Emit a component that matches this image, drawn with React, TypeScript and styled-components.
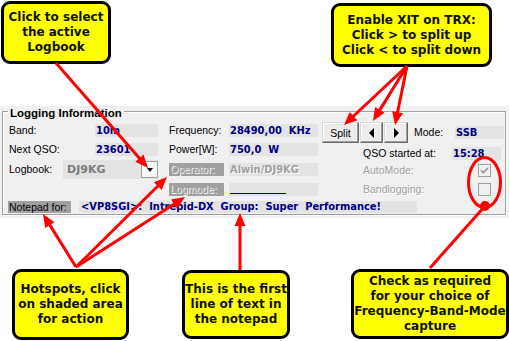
import React from "react";
import styled, { createGlobalStyle } from "styled-components";

const GlobalStyle = createGlobalStyle`
  html, body { margin: 0; padding: 0; background: #ffffff; }
  body { overflow: hidden; }
  * { box-sizing: border-box; }
`;

const VALUE_FONT = `"DejaVu Sans Condensed", "DejaVu Sans", sans-serif`;

const Page = styled.div`
  position: relative;
  width: 509px;
  height: 341px;
  overflow: hidden;
  background: #ffffff;
  font-family: "Liberation Sans", Arial, sans-serif;
`;

const TopRow = styled.div`
  display: flex;
  align-items: flex-start;
  height: 106px;
`;

const BottomRow = styled.div`
  display: flex;
  align-items: flex-start;
  padding-top: 51px;
`;

const Callout = styled.div<{ $w: number; $h: number; $mt?: number; $ml?: number }>`
  flex: none;
  width: ${(p) => p.$w}px;
  height: ${(p) => p.$h}px;
  margin-top: ${(p) => p.$mt ?? 0}px;
  margin-left: ${(p) => p.$ml ?? 0}px;
  display: flex;
  align-items: center;
  justify-content: center;
  text-align: center;
  background: #ffff00;
  border: 3px solid #000;
  border-radius: 9px;
  font-family: "DejaVu Sans", sans-serif;
  font-weight: bold;
  font-size: 12px;
  line-height: 15px;
  color: #111;
  white-space: nowrap;
`;

const Panel = styled.div`
  height: 112px;
  background: #f0f0f0;
  padding: 5px 3px 0 2px;
`;

const GroupBox = styled.div`
  position: relative;
  height: 104px;
  border: 1px solid #a0a0a0;
  box-shadow: inset 1px 1px 0 #ffffff, 1px 1px 0 #ffffff;
`;

const Legend = styled.span`
  position: absolute;
  top: -5px;
  left: 5px;
  padding: 0 2px;
  background: #f0f0f0;
  font: bold 11.5px/13px "Liberation Sans", Arial, sans-serif;
  color: #000;
  white-space: nowrap;
`;

const Columns = styled.div`
  display: flex;
  align-items: flex-start;
  padding-top: 10px;
`;

const Column = styled.div<{ $w: number; $ml: number; $mt?: number }>`
  flex: none;
  display: flex;
  flex-direction: column;
  width: ${(p) => p.$w}px;
  margin-left: ${(p) => p.$ml}px;
  margin-top: ${(p) => p.$mt ?? 0}px;
`;

const Row = styled.div<{ $h: number; $mt?: number; $pl?: number }>`
  display: flex;
  align-items: center;
  height: ${(p) => p.$h}px;
  margin-top: ${(p) => p.$mt ?? 0}px;
  padding-left: ${(p) => p.$pl ?? 0}px;
`;

const Label = styled.div<{ $w?: number; $ml?: number; $disabled?: boolean }>`
  flex: none;
  width: ${(p) => (p.$w ? `${p.$w}px` : "auto")};
  margin-left: ${(p) => p.$ml ?? 0}px;
  font-size: 10.5px;
  line-height: 13px;
  color: ${(p) => (p.$disabled ? "#a0a0a0" : "#000")};
  text-shadow: ${(p) => (p.$disabled ? "1px 1px 0 #ffffff" : "none")};
  white-space: nowrap;
`;

const ShadedLabel = styled.div<{ $w: number; $h: number; $disabled?: boolean }>`
  flex: none;
  width: ${(p) => p.$w}px;
  height: ${(p) => p.$h}px;
  padding-left: 1px;
  background: #a0a0a0;
  font-size: 10.5px;
  line-height: ${(p) => p.$h}px;
  color: ${(p) => (p.$disabled ? "#a0a0a0" : "#000")};
  text-shadow: ${(p) => (p.$disabled ? "1px 1px 0 #ffffff" : "none")};
  white-space: nowrap;
`;

const Value = styled.div<{ $w: number; $h?: number; $ml?: number; $disabled?: boolean }>`
  flex: none;
  width: ${(p) => p.$w}px;
  height: ${(p) => p.$h ?? 13}px;
  margin-left: ${(p) => p.$ml ?? 0}px;
  padding-left: 1px;
  background: #e3e3e3;
  font-family: ${VALUE_FONT};
  font-weight: bold;
  font-size: 11px;
  line-height: ${(p) => p.$h ?? 13}px;
  color: ${(p) => (p.$disabled ? "#a0a0a0" : "#000080")};
  text-shadow: ${(p) => (p.$disabled ? "1px 1px 0 #ffffff" : "none")};
  white-space: pre;
  overflow: hidden;
`;

const BlankLine = styled.span`
  display: inline-block;
  width: 56px;
  height: 11px;
  border-bottom: 1.5px solid #000080;
  vertical-align: top;
`;

const Combo = styled.div`
  flex: none;
  display: flex;
  align-items: center;
  justify-content: space-between;
  width: 95px;
  height: 19px;
  background: #e3e3e3;
`;

const ComboText = styled.span`
  padding-left: 4px;
  font-family: "DejaVu Sans", sans-serif;
  font-weight: bold;
  font-size: 11px;
  color: #7c7c7c;
`;

const DropButton = styled.div`
  display: flex;
  align-items: center;
  justify-content: center;
  width: 17px;
  height: 17px;
  border: 1px solid #a0a0a0;
  background: #f7f7f7;
`;

const DownTriangle = styled.span`
  width: 0;
  height: 0;
  border-left: 3.5px solid transparent;
  border-right: 3.5px solid transparent;
  border-top: 4px solid #000;
`;

const Button = styled.div<{ $w: number }>`
  flex: none;
  display: flex;
  align-items: center;
  justify-content: center;
  width: ${(p) => p.$w}px;
  height: 21px;
  margin-right: 1px;
  background: #ececec;
  border: 1px solid;
  border-color: #d8d8d8 #6a6a6a #6a6a6a #d8d8d8;
  box-shadow: inset -1px -1px 0 #a0a0a0, inset 1px 1px 0 #ffffff;
  font-size: 10.5px;
  color: #000;
`;

const SideTriangle = styled.span<{ $dir: "left" | "right" }>`
  width: 0;
  height: 0;
  border-top: 5px solid transparent;
  border-bottom: 5px solid transparent;
  ${(p) => (p.$dir === "left" ? "border-right: 5px solid #000;" : "border-left: 5px solid #000;")}
`;

const CheckBox = styled.span`
  flex: none;
  display: flex;
  align-items: center;
  justify-content: center;
  width: 13px;
  height: 13px;
  margin-left: auto;
  margin-right: 10px;
  border: 1px solid #a0a0a0;
  background: #f0f0f0;
`;

const NotepadRow = styled.div`
  display: flex;
  align-items: center;
  height: 12px;
  margin-top: 5px;
  margin-left: 5px;
`;

const NotepadText = styled.div`
  width: 338px;
  height: 12px;
  margin-left: 8px;
  padding-left: 2px;
  background: #e3e3e3;
  font-family: ${VALUE_FONT};
  font-weight: bold;
  font-size: 11px;
  line-height: 12px;
  color: #000080;
  white-space: pre;
  overflow: hidden;
`;

const Overlay = styled.svg`
  position: absolute;
  left: 0;
  top: 0;
  pointer-events: none;
`;

type ArrowProps = { x1: number; y1: number; x2: number; y2: number };

function Arrow({ x1, y1, x2, y2 }: ArrowProps) {
  const dx = x2 - x1;
  const dy = y2 - y1;
  const len = Math.hypot(dx, dy);
  const ux = dx / len;
  const uy = dy / len;
  const hl = 13;
  const hw = 5.5;
  const bx = x2 - ux * hl;
  const by = y2 - uy * hl;
  const px = -uy;
  const py = ux;
  return (
    <g>
      <line x1={x1} y1={y1} x2={bx + ux * 2} y2={by + uy * 2} stroke="#ff0000" strokeWidth={3} />
      <polygon
        points={`${x2},${y2} ${bx + px * hw},${by + py * hw} ${bx - px * hw},${by - py * hw}`}
        fill="#ff0000"
      />
    </g>
  );
}

const arrows: ArrowProps[] = [
  { x1: 56, y1: 63, x2: 148, y2: 168 },
  { x1: 407, y1: 66, x2: 344, y2: 125 },
  { x1: 407, y1: 66, x2: 373, y2: 121 },
  { x1: 407, y1: 66, x2: 395, y2: 125 },
  { x1: 76, y1: 267, x2: 43, y2: 214 },
  { x1: 76, y1: 267, x2: 167, y2: 177 },
  { x1: 76, y1: 267, x2: 185, y2: 197 },
  { x1: 240, y1: 270, x2: 240, y2: 213 },
];

export default function App() {
  return (
    <>
      <GlobalStyle />
      <Page>
        <TopRow>
          <Callout $w={110} $h={63} $mt={1} $ml={1}>
            Click to select
            <br />
            the active
            <br />
            Logbook
          </Callout>
          <Callout $w={161} $h={64} $mt={3} $ml={220}>
            Enable XIT on TRX:
            <br />
            Click &gt; to split up
            <br />
            Click &lt; to split down
          </Callout>
        </TopRow>

        <Panel>
          <GroupBox>
            <Legend>Logging Information</Legend>
            <Columns>
              <Column $w={149} $ml={6} $mt={2}>
                <Row $h={13}>
                  <Label $w={86}>Band:</Label>
                  <Value $w={63}>10m</Value>
                </Row>
                <Row $h={13} $mt={6}>
                  <Label $w={86}>Next QSO:</Label>
                  <Value $w={63}>23601</Value>
                </Row>
                <Row $h={19} $mt={4}>
                  <Label $w={54}>Logbook:</Label>
                  <Combo>
                    <ComboText>DJ9KG</ComboText>
                    <DropButton>
                      <DownTriangle />
                    </DropButton>
                  </Combo>
                </Row>
              </Column>

              <Column $w={149} $ml={11} $mt={2}>
                <Row $h={13}>
                  <Label $w={60}>Frequency:</Label>
                  <Value $w={89}>{"28490,00  KHz"}</Value>
                </Row>
                <Row $h={13} $mt={6}>
                  <Label $w={60}>Power[W]:</Label>
                  <Value $w={89}>{"750,0  W"}</Value>
                </Row>
                <Row $h={13} $mt={7}>
                  <ShadedLabel $w={55} $h={13} $disabled>
                    Operator:
                  </ShadedLabel>
                  <Value $w={89} $ml={5} $disabled>
                    Alwin/DJ9KG
                  </Value>
                </Row>
                <Row $h={13} $mt={7}>
                  <ShadedLabel $w={55} $h={13} $disabled>
                    Logmode:
                  </ShadedLabel>
                  <Value $w={89} $ml={5}>
                    <BlankLine />
                  </Value>
                </Row>
              </Column>

              <Column $w={179} $ml={4}>
                <Row $h={21}>
                  <Button $w={37}>Split</Button>
                  <Button $w={23}>
                    <SideTriangle $dir="left" />
                  </Button>
                  <Button $w={24}>
                    <SideTriangle $dir="right" />
                  </Button>
                  <Label $w={41} $ml={5}>
                    Mode:
                  </Label>
                  <Value $w={49}>SSB</Value>
                </Row>
                <Row $h={13} $mt={4} $pl={41}>
                  <Label $w={89}>QSO started at:</Label>
                  <Value $w={49}>15:28</Value>
                </Row>
                <Row $h={13} $mt={4} $pl={41}>
                  <Label $disabled>AutoMode:</Label>
                  <CheckBox>
                    <svg width="9" height="9" viewBox="0 0 9 9">
                      <path d="M1 4.2 L3.3 6.6 L8 1.8" fill="none" stroke="#a0a0a0" strokeWidth="1.8" />
                    </svg>
                  </CheckBox>
                </Row>
                <Row $h={13} $mt={6} $pl={41}>
                  <Label $disabled>Bandlogging:</Label>
                  <CheckBox />
                </Row>
              </Column>
            </Columns>

            <NotepadRow>
              <ShadedLabel $w={63} $h={12}>
                Notepad for:
              </ShadedLabel>
              <NotepadText>{"<VP8SGI>:  Intrepid-DX  Group:  Super  Performance!"}</NotepadText>
            </NotepadRow>
          </GroupBox>
        </Panel>

        <BottomRow>
          <Callout $w={117} $h={71} $ml={12}>
            Hotspots, click
            <br />
            on shaded area
            <br />
            for action
          </Callout>
          <Callout $w={108} $h={69} $mt={1} $ml={53}>
            This is the first
            <br />
            line of text in
            <br />
            the notepad
          </Callout>
          <Callout $w={158} $h={70} $ml={61}>
            Check as required
            <br />
            for your choice of
            <br />
            Frequency-Band-Mode
            <br />
            capture
          </Callout>
        </BottomRow>

        <Overlay width={509} height={341} viewBox="0 0 509 341">
          {arrows.map((a, i) => (
            <Arrow key={i} {...a} />
          ))}
          <ellipse cx={484.5} cy={182.5} rx={16} ry={25} fill="none" stroke="#ff0000" strokeWidth={3} />
          <line x1={430} y1={268} x2={485} y2={206} stroke="#ff0000" strokeWidth={3} />
          <circle cx={485} cy={206} r={5} fill="#ff0000" />
        </Overlay>
      </Page>
    </>
  );
}
